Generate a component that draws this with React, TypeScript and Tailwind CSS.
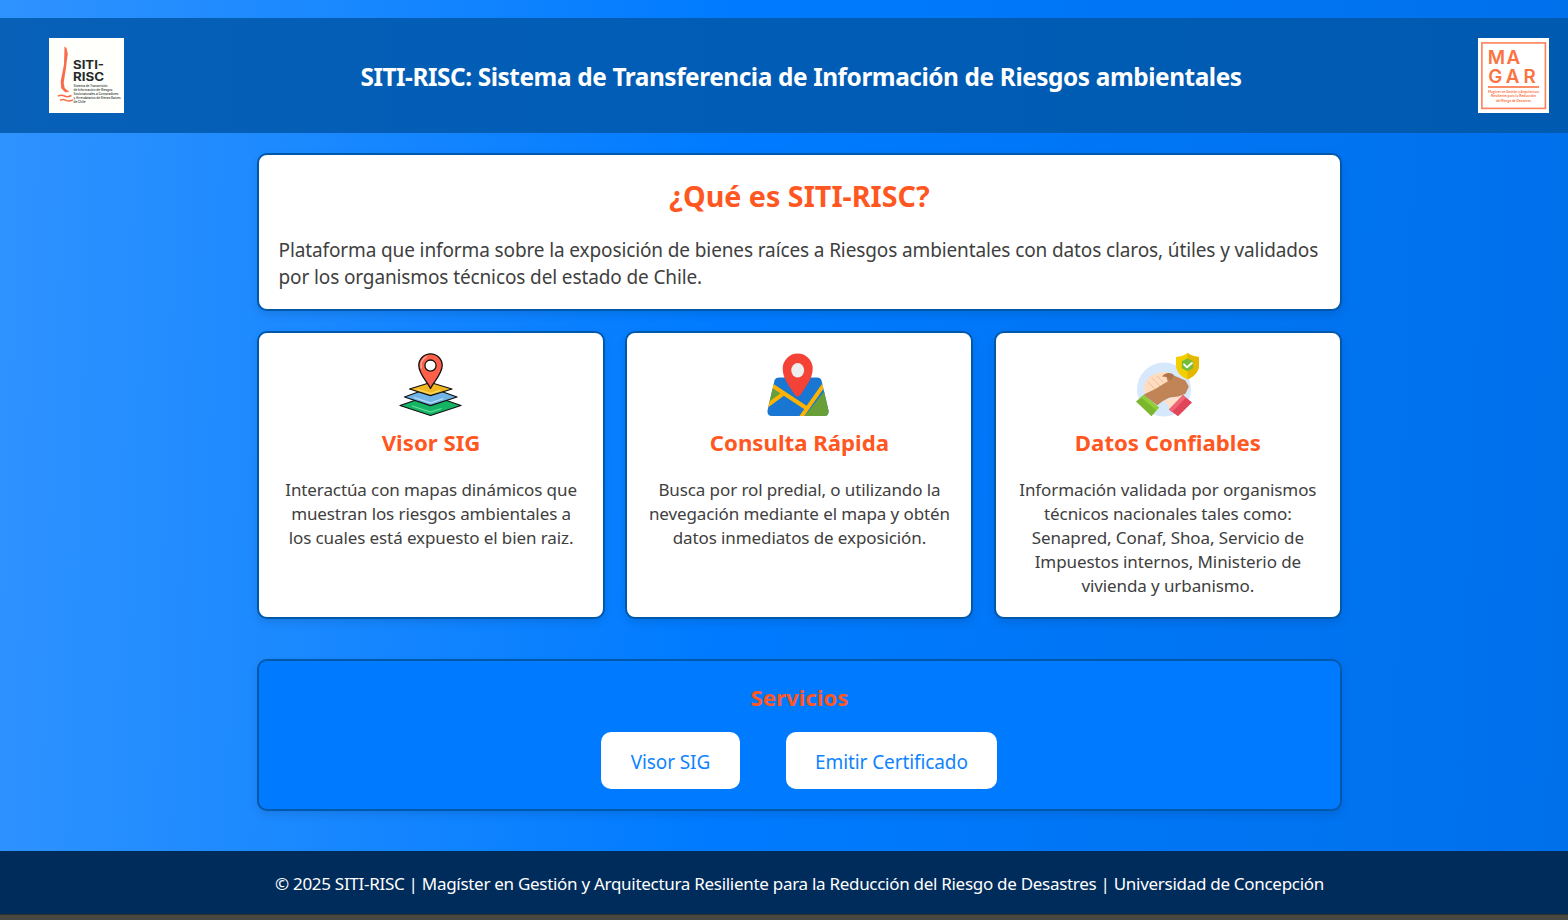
import React from 'react';

function SitiLogo() {
  return (
    <svg width="75" height="75" viewBox="0 0 75 75" className="shrink-0 overflow-visible" fontFamily="Inter, sans-serif">
      <rect width="75" height="75" fill="#fffffb" />
      <path d="M15.500 8.500l2 1.500 1.300 6-1 7-.8 7-1.300 8-1 7 1 5 4.500 4-4 .3-4-4-.5-7 1.800-9 1.500-8z" fill="#fa6b4e" />
      <path d="M9 58q3.500-1.500 6.500 0t7-.5M11 62.300q3-1.500 6 0t7-.5" fill="none" stroke="#fa6b4e" strokeWidth="1.500" />
      <g fill="#252b2b">
        <text x="24" y="31" fontSize="12" fontWeight="700" textLength="31" lengthAdjust="spacingAndGlyphs">SITI-</text>
        <text x="24" y="43" fontSize="12" fontWeight="700" textLength="31" lengthAdjust="spacingAndGlyphs">RISC</text>
        <g fontSize="3.100" fontWeight="500">
          <text x="24.500" y="49" textLength="34" lengthAdjust="spacingAndGlyphs">Sistema de Transmisión</text>
          <text x="24.500" y="52.900" textLength="39" lengthAdjust="spacingAndGlyphs">de Información de Riesgos</text>
          <text x="24.500" y="56.800" textLength="45" lengthAdjust="spacingAndGlyphs">Socionaturales a Compradores</text>
          <text x="24.500" y="60.700" textLength="47" lengthAdjust="spacingAndGlyphs">y Arrendatarios de Bienes Raíces</text>
          <text x="24.500" y="64.600" textLength="12" lengthAdjust="spacingAndGlyphs">de Chile</text>
        </g>
      </g>
    </svg>
  );
}

function MagarLogo() {
  return (
    <svg width="71" height="75" viewBox="0 0 71 75" className="shrink-0 overflow-visible" fontFamily="Lato, sans-serif" fill="#fc7240">
      <rect width="71" height="75" fill="#fff" />
      <rect x="3.900" y="4.900" width="63.500" height="65.500" fill="none" stroke="#fd8058" strokeWidth="1.600" />
      <g fontFamily="Inter, sans-serif" fontSize="18.800" fontWeight="600">
        <text x="9.800" y="26.300" letterSpacing="1.500">MA</text>
        <text x="10.300" y="45.200" letterSpacing="4">GAR</text>
      </g>
      <rect x="10" y="48.200" width="51" height="1.600" />
      <g fontSize="3.400" fontWeight="700">
        <text x="10" y="55.100" textLength="51" lengthAdjust="spacingAndGlyphs">Magíster en Gestión y Arquitectura</text>
        <text x="13" y="59.400" textLength="45" lengthAdjust="spacingAndGlyphs">Resiliente para la Reducción</text>
        <text x="18" y="63.700" textLength="35" lengthAdjust="spacingAndGlyphs">del Riesgo de Desastres</text>
      </g>
    </svg>
  );
}

function LayersIcon() {
  return (
    <svg width="64" height="64" viewBox="0 0 64 64" strokeLinejoin="round">
      <g stroke="#111" strokeWidth="1.300">
        <path d="M1 52.500L31.500 42l30.500 10.500-30.500 10z" fill="#15b565" />
        <path d="M5.500 44l26-9.500L58 44l-26.500 8.700z" fill="#71b4e8" />
        <path d="M10.500 36l21-6.500L53 36l-21.500 6.700z" fill="#f2b821" />
      </g>
      <g fill="none" strokeWidth="1.100">
        <path d="M13 53l18.500 6 11-3.500" stroke="#6be0a0" />
        <path d="M15 44.500l16.500 5.500 13-4.500" stroke="#c3e2f8" />
        <path d="M18 36.500l13.500 4 10-3.300" stroke="#ffe174" />
      </g>
      <path d="M31.500 35.500C28.500 29 19.800 21 19.800 12.500a11.700 11.700 0 0 1 23.400 0c0 8.500-8.700 16.500-11.700 23z" fill="#ff6049" stroke="#111" strokeWidth="1.300" />
      <circle cx="31.500" cy="12.600" r="5.600" fill="#fff" stroke="#111" strokeWidth="1.300" />
      <path d="M22.300 15c-1-5 1-9 5-11.200" fill="none" stroke="#ffb0a0" strokeWidth="1.200" strokeLinecap="round" />
    </svg>
  );
}

function MapIcon() {
  return (
    <svg width="64" height="64" viewBox="0 0 64 64">
      <defs>
        <clipPath id="map-shape">
          <path d="M12 24.500h38q3.500 0 4.500 3l7 30q.5 5.500-4.500 5.500H5q-5 0-4.500-5.500l7-30q1-3 4.500-3z" />
        </clipPath>
      </defs>
      <g clipPath="url(#map-shape)">
        <path d="M0 20h64v44H0z" fill="#1976d2" />
        <path d="M0 32l14 9L0 52zM64 30v35H36z" fill="#689f38" />
        <path d="M2 30.500l38 25M16 41L-3 55M61 26L32 67" fill="none" stroke="#ffb300" strokeWidth="4" />
      </g>
      <path d="M30.700 43.500q-1.500 0-3-2C21.500 32 15.700 25 15.700 15.500a15 15 0 0 1 30 0c0 9.500-5.800 16.500-12 26q-1.500 2-3 2z" fill="#f44336" />
      <ellipse cx="30.700" cy="17.300" rx="6.400" ry="7.300" fill="#eee" />
    </svg>
  );
}

function TrustIcon() {
  return (
    <svg width="64" height="64" viewBox="0 0 64 64" strokeLinejoin="round" strokeLinecap="round">
      <circle cx="28" cy="36.500" r="27" fill="#d6e8fc" />
      <path d="M34 46l8-4 7 3-13 14-8-12z" fill="#ffe0c8" />
      <path d="M10 40l-1.500-6 2.500-5 2.500-4 5-2.500L24 20l8 .5 3 8.200-12 10z" fill="#ffdcbf" stroke="#ffdcbf" strokeWidth="2" />
      <path d="M12 29l7 7M16 25l8 8M21 23l7 7" stroke="#efbe96" strokeWidth="1" />
      <path d="M8.700 42L20 36.500 32.700 28.700l-1.700-5 6-.7L48.700 28l3.300 5.700-3.300 6.600-6.700 2.400-8.300 1-6.700 3.300-5.700 4.300z" fill="#c08457" stroke="#c08457" strokeWidth="1.500" />
      <path d="M26 23.500q3-4 7.500-3.500 4 .5 4.500 3l-3.500 4.500-3.500-3.500z" fill="#b27549" />
      <path d="M0 48.500L7.500 42 23 54.500l-7.500 8.700z" fill="#7cb62d" />
      <path d="M5 44.300l2.500-2.300L23 54.500 20.500 57.500z" fill="#90cf38" />
      <path d="M33 56.500L47 42l9 7.500-14 13.700z" fill="#e04559" />
      <path d="M33 56.500L47 42l3 2.500-14 14.700z" fill="#f26577" />
      <path d="M51.500 0Q56 3.500 63 4v8c0 7-5 11.500-11.500 14.500C45 23.500 40 19 40 12V4q7-.5 11.500-4z" fill="#f4cf00" />
      <path d="M51.500 0Q56 3.500 63 4v8c0 7-5 11.500-11.500 14.500z" fill="#e6b700" />
      <path d="M51.500 5.300l5.700 3v6.900l-5.700 3-5.700-3V8.300z" fill="#76bd37" />
      <path d="M48 11.300l3 3 5-4.300" fill="none" stroke="#fff" strokeWidth="1.800" />
    </svg>
  );
}

interface CardData {
  title: string;
  icon: React.ReactNode;
  lines: string[];
}

const cards: CardData[] = [
  {
    title: 'Visor SIG',
    icon: <LayersIcon />,
    lines: ['Interactúa con mapas dinámicos que', 'muestran los riesgos ambientales a', 'los cuales está expuesto el bien raiz.'],
  },
  {
    title: 'Consulta Rápida',
    icon: <MapIcon />,
    lines: ['Busca por rol predial, o utilizando la', 'nevegación mediante el mapa y obtén', 'datos inmediatos de exposición.'],
  },
  {
    title: 'Datos Confiables',
    icon: <TrustIcon />,
    lines: ['Información validada por organismos', 'técnicos nacionales tales como:', 'Senapred, Conaf, Shoa, Servicio de', 'Impuestos internos, Ministerio de', 'vivienda y urbanismo.'],
  },
];

const box = 'rounded-[10px] border-2 border-[#0058ab] shadow-[0_4px_8px_rgba(0,0,0,0.1)]';

export default function App() {
  return (
    <div className="flex h-[920px] w-full flex-col overflow-hidden whitespace-nowrap bg-[linear-gradient(92deg,#2f93ff_0%,#007bff_46%,#0070ea_100%)] pt-[18px] font-['Noto_Sans','Open_Sans',sans-serif] text-[#404040]">
      <header className="flex h-[115px] shrink-0 items-center justify-between bg-[linear-gradient(90deg,#0860b7_0%,#005cb5_46%,#005ab0_100%)] pl-[49px] pr-[19px]">
        <SitiLogo />
        <h1 className="mt-[3px] text-[24.4px] font-bold tracking-[-0.46px] text-white [word-spacing:0.3px]">
          SITI-RISC: Sistema de Transferencia de Información de Riesgos ambientales
        </h1>
        <MagarLogo />
      </header>

      <main className="ml-[257px] mt-5 flex w-[1084.900px] shrink-0 flex-col">
        <section className={`h-[158px] bg-white px-5 pt-[21px] ${box}`}>
          <h2 className="text-center text-[28.7px] font-bold leading-10 text-[#ff5722]">¿Qué es SITI-RISC?</h2>
          <p className="-ml-[0.5px] mt-[21px] text-[19px] leading-[27px] tracking-[-0.12px]">
            Plataforma que informa sobre la exposición de bienes raíces a Riesgos ambientales con datos claros, útiles y validados
            <br />
            por los organismos técnicos del estado de Chile.
          </p>
        </section>

        <section className="mt-5 grid h-[288px] grid-cols-3 gap-[20.300px]">
          {cards.map((card) => (
            <article key={card.title} className={`flex flex-col items-center bg-white pt-5 ${box}`}>
              {card.icon}
              <h3 className="mt-2.5 text-[22.2px] font-bold leading-8 text-[#ff5722]">{card.title}</h3>
              <p className="mt-[19px] text-center text-[17px] leading-6 tracking-[-0.1px]">
                {card.lines.map((line) => (
                  <span key={line} className="block">{line}</span>
                ))}
              </p>
            </article>
          ))}
        </section>

        <section className={`mt-10 flex h-[152px] flex-col items-center bg-[#007bff] pt-[21px] ${box}`}>
          <h3 className="text-[22.2px] font-bold leading-8 text-[#ff5722]">Servicios</h3>
          <div className="mr-px mt-[18px] flex gap-[46px] text-[19px] tracking-[-0.1px] text-[#0f83ff]">
            <a className="flex h-[57px] w-[139px] items-center justify-center rounded-[10px] bg-white pt-[3px]">Visor SIG</a>
            <a className="flex h-[57px] w-[211px] items-center justify-center rounded-[10px] bg-white pt-[3px]">Emitir Certificado</a>
          </div>
        </section>
      </main>

      <footer className="mt-10 flex h-[63px] shrink-0 items-center justify-center bg-[#002c5c] pl-[31px] pt-[2px] text-[17px] tracking-[-0.29px] text-white">
        <p>© 2025 SITI-RISC | Magíster en Gestión y Arquitectura Resiliente para la Reducción del Riesgo de Desastres | Universidad de Concepción</p>
      </footer>
      <div className="h-1.5 shrink-0 border-t border-[#33312d] bg-[#494841]" />
    </div>
  );
}
